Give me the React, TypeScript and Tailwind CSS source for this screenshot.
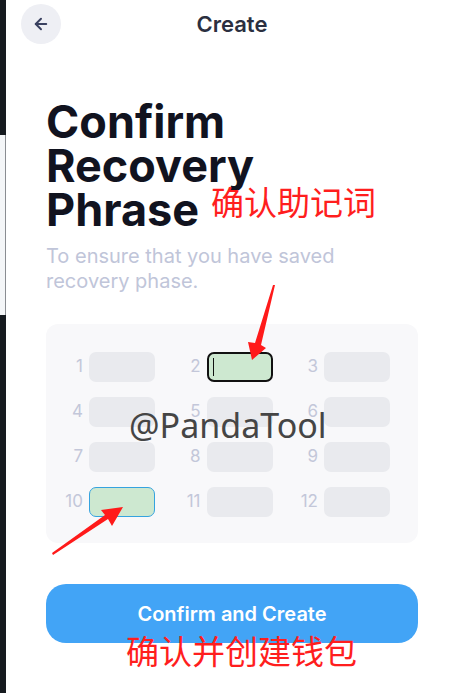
import { ArrowLeft } from "lucide-react";

const words = Array.from({ length: 12 }, (_, i) => i + 1);

function WordCell({ n }: { n: number }) {
  const boxClass =
    n === 2
      ? "bg-[#cde8d0] border-2 border-[#111111]"
      : n === 10
        ? "bg-[#cde8d0] border border-[#35a3df]"
        : "bg-[#e9eaee]";
  return (
    <div className="flex items-center w-[91px] h-[30px]">
      <span className="w-[20px] pr-[1px] text-right text-[17px] text-[#c3c7d9]">{n}</span>
      <div className={`ml-[5px] w-[66px] h-[30px] rounded-[7px] flex items-center ${boxClass}`}>
        {n === 2 && <div className="ml-[4px] w-[1.5px] h-[18px] bg-[#111111]" />}
      </div>
    </div>
  );
}

export default function App() {
  return (
    <div
      className="relative w-[449px] h-[693px] overflow-hidden bg-white flex"
      style={{ fontFamily: "Inter, 'Noto Sans', sans-serif" }}
    >
      {/* left edge of neighbouring window */}
      <div className="w-[6px] shrink-0 bg-[#161a1f] flex flex-col">
        <div className="h-[135px]" />
        <div className="h-[180px] bg-[#f4f6f8] border-r border-[#8a8d92]" />
      </div>

      <div className="w-[452px] shrink-0 px-[40px]">
        <header className="relative h-[48px] flex items-center justify-center -mx-[40px]">
          <button className="absolute left-[15px] top-[4px] w-[40px] h-[40px] rounded-full bg-[#eeeff4] flex items-center justify-center">
            <ArrowLeft className="w-[18px] h-[18px] text-[#3a4160]" strokeWidth={2.6} />
          </button>
          <h2 className="text-[22px] font-semibold text-[#2b2f40]">Create</h2>
        </header>

        <h1 className="mt-[52px] text-[45px] leading-[44px] font-bold text-[#11131f]">
          Confirm
          <br />
          Recovery
          <br />
          Phrase
        </h1>
        <p className="mt-[12px] text-[20px] leading-[25px] text-[#c0c5d9]">
          To ensure that you have saved
          <br />
          recovery phase.
        </p>

        <div className="mt-[30px] h-[219px] rounded-[12px] bg-[#f8f8fa] pl-[18px] pr-[28px] pt-[28px] flex flex-wrap justify-between content-start gap-y-[15px]">
          {words.map((n) => (
            <WordCell key={n} n={n} />
          ))}
        </div>

        <button className="mt-[41px] w-full h-[59px] rounded-[20px] bg-[#42a4f6] text-white text-[20px] font-semibold">
          Confirm and Create
        </button>
      </div>

      {/* watermark and annotations */}
      <div
        className="absolute left-[129px] top-[408px] text-[34px] text-[#454545] leading-none"
        style={{ fontFamily: "'Noto Sans', sans-serif" }}
      >
        @PandaTool
      </div>
      <div
        className="absolute left-[211px] top-[185px] text-[33px] leading-none text-[#ff1e1e]"
        style={{ fontFamily: "'Noto Sans CJK SC', sans-serif" }}
      >
        确认助记词
      </div>
      <div
        className="absolute left-[126px] top-[634px] text-[33px] leading-none text-[#ff1e1e]"
        style={{ fontFamily: "'Noto Sans CJK SC', sans-serif" }}
      >
        确认并创建钱包
      </div>
      <svg className="absolute left-0 top-0 pointer-events-none" width="449" height="693">
        <polygon
          points="275,285 261,345 266,348 252,360 248,342 255,343 273,285"
          fill="#ff1a1a"
        />
        <polygon
          points="52,553 105,515 101,510 123,507 112,526 108,519 53,555"
          fill="#ff1a1a"
        />
      </svg>
    </div>
  );
}
